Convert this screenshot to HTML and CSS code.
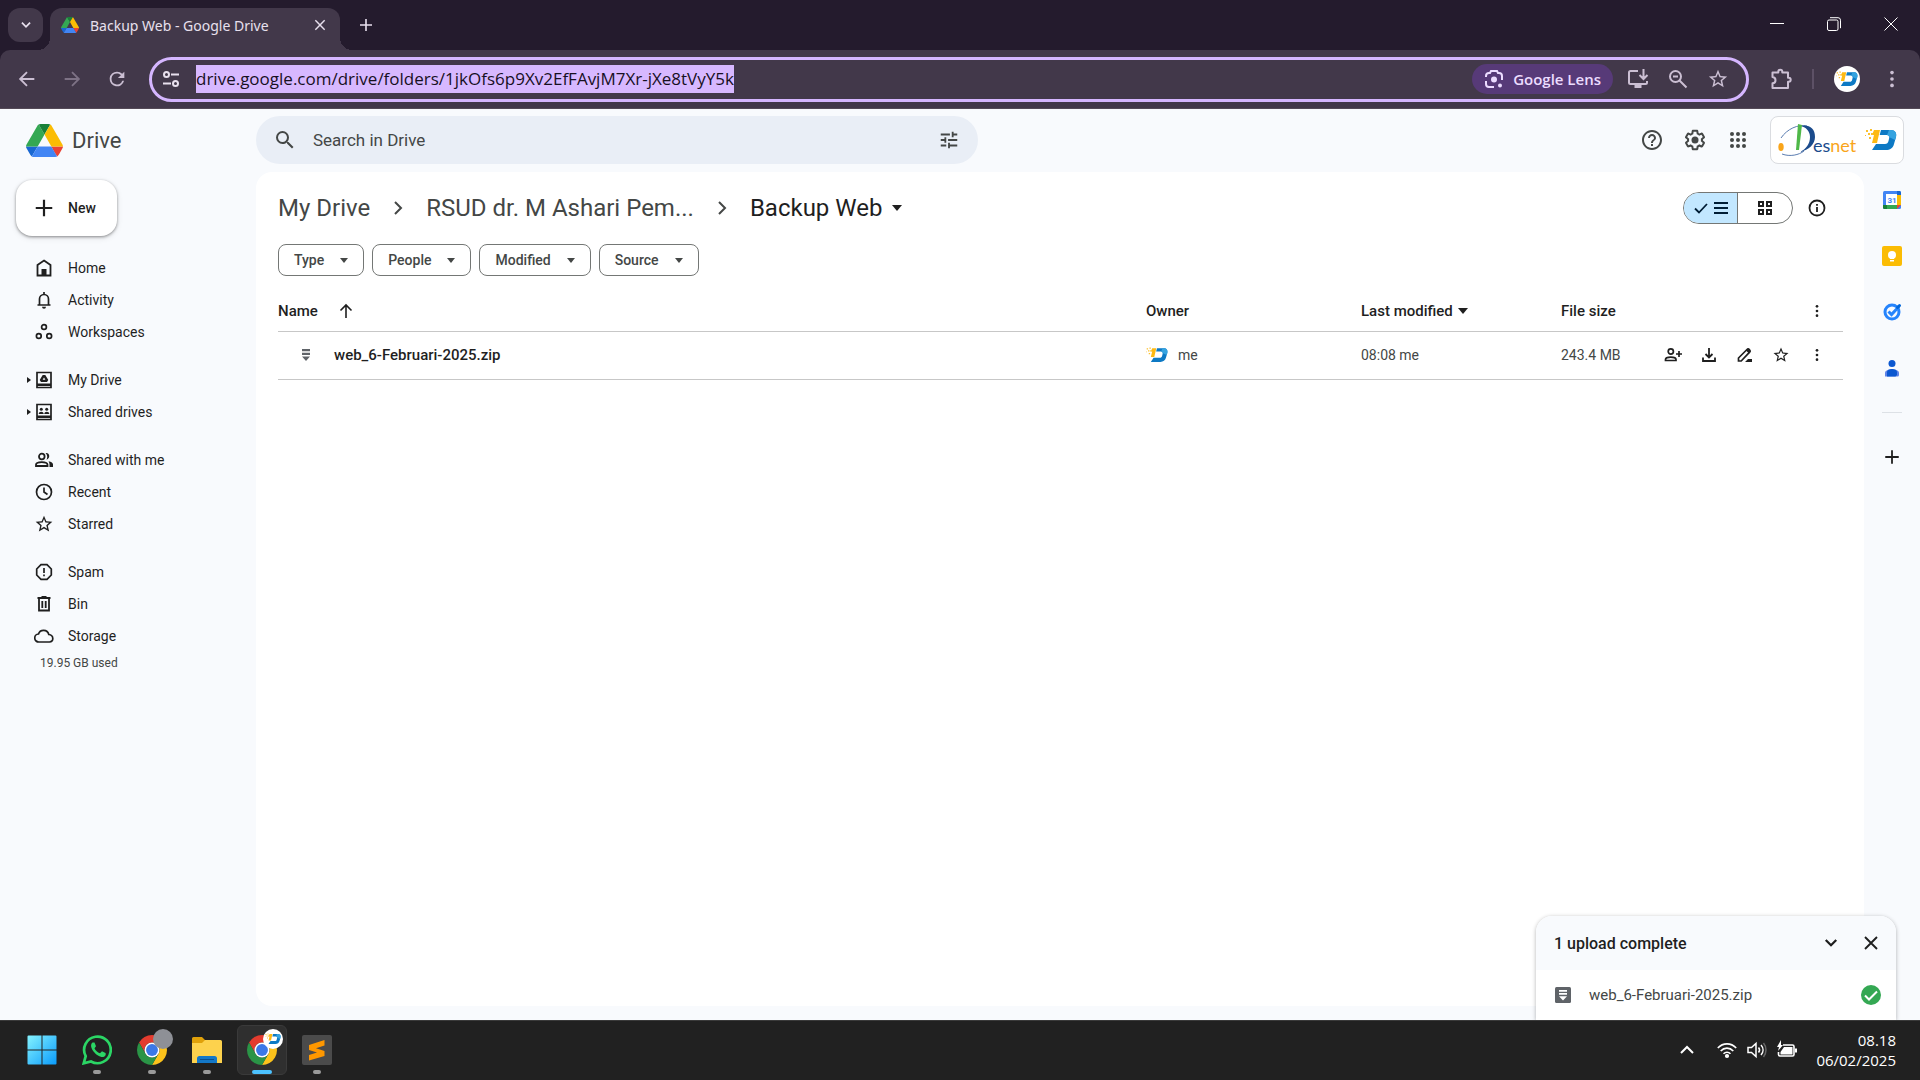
FILE: index.html
```html
<!DOCTYPE html>
<html lang="en">
<head>
<meta charset="utf-8">
<meta name="viewport" content="width=device-width, initial-scale=1">
<title>Backup Web - Google Drive</title>
<link rel="stylesheet" href="styles.css">
</head>
<body>
<svg class="sprite" aria-hidden="true">
  <symbol id="drive-logo" viewBox="0 0 87.3 78">
    <path d="m6.6 66.85 3.85 6.65c.8 1.4 1.95 2.5 3.3 3.3l13.75-23.8H0c0 1.55.4 3.1 1.2 4.5z" fill="#1967d2"/>
    <path d="M43.65 25 29.9 1.2c-1.35.8-2.5 1.9-3.3 3.3l-25.4 44A9.06 9.06 0 0 0 0 53h27.5z" fill="#34a853"/>
    <path d="M73.55 76.8c1.35-.8 2.5-1.9 3.3-3.3l1.6-2.75 7.65-13.25c.8-1.4 1.2-2.95 1.2-4.5H59.8l5.85 11.5z" fill="#ea4335"/>
    <path d="M43.65 25 57.4 1.2C56.05.4 54.5 0 52.9 0H34.4c-1.6 0-3.15.45-4.5 1.2z" fill="#188038"/>
    <path d="M59.8 53H27.5L13.75 76.8c1.35.8 2.9 1.2 4.5 1.2h50.8c1.6 0 3.15-.45 4.5-1.2z" fill="#4285f4"/>
    <path d="m73.4 26.5-12.7-22c-.8-1.4-1.95-2.5-3.3-3.3L43.65 25 59.8 53h27.45c0-1.55-.4-3.1-1.2-4.5z" fill="#fbbc04"/>
  </symbol>
  <symbol id="brand-d" viewBox="0 0 32 22">
    <path d="M16 1h10c4 0 6 3 5 7l-2 7c-1 4-4 6-8 6H7l4-6h9c2 0 3-1 3.500-3l.700-3c.500-2-.500-3-2.500-3h-7z" fill="#0d79c4"/>
    <path d="M24 1h2c4 0 6 3 5 7l-1 3-6-3c0-1-.500-2-2-2z" fill="#35a3e0"/>
    <path d="M9 1h6l-3 13H7l2-8H7z" fill="#fdb913"/>
    <path d="M1 1h2v2H1zM5 0h2v2H5zM3 4h2v2H3zM6 4h2v2H6zM0 6h1v1H0zM4 8h2v2H4z" fill="#fbc02d"/>
  </symbol>
  <symbol id="chrome" viewBox="2 2 44 44">
    <path d="M4.950 13A22 22 0 0 1 43.050 13H24a11 11 0 0 0-9.530 16.500z" fill="#e33b2e"/>
    <path d="M43.050 13A22 22 0 0 1 24 46l9.530-16.500A11 11 0 0 0 24 13z" fill="#fcc21b"/>
    <path d="M24 46A22 22 0 0 1 4.950 13l9.520 16.500a11 11 0 0 0 19.060 0z" fill="#2a9446"/>
    <circle cx="24" cy="24" r="11" fill="#fff"/><circle cx="24" cy="24" r="8.700" fill="#3b78e7"/>
  </symbol>
  <symbol id="dots" viewBox="0 0 24 24"><circle cx="12" cy="5" r="2"/><circle cx="12" cy="12" r="2"/><circle cx="12" cy="19" r="2"/></symbol>
  <symbol id="caret" viewBox="0 0 10 6"><path d="M0 0h10L5 6z"/></symbol>
  <symbol id="chev-right" viewBox="0 0 24 24"><path d="m9 6 6 6-6 6" fill="none" stroke="currentColor" stroke-width="2"/></symbol>
  <symbol id="chev-down" viewBox="0 0 24 24"><path d="m5 8 7 7 7-7" fill="none" stroke="currentColor" stroke-width="3"/></symbol>
  <symbol id="close" viewBox="0 0 24 24"><path d="m4 4 16 16M20 4 4 20" fill="none" stroke="currentColor" stroke-width="2.500"/></symbol>
  <symbol id="plus" viewBox="0 0 24 24"><path d="M12 3v18M3 12h18" fill="none" stroke="currentColor" stroke-width="2.400"/></symbol>
  <symbol id="star" viewBox="0 0 24 24"><path d="m22 9.240-7.190-.620L12 2 9.190 8.630 2 9.240l5.460 4.730L5.820 21 12 17.270 18.180 21l-1.630-7.030zM12 15.400l-3.760 2.270 1-4.280-3.320-2.880 4.380-.380L12 6.100l1.710 4.040 4.380.380-3.320 2.880 1 4.280z"/></symbol>
  <symbol id="zip" viewBox="0 0 8 12"><path d="M0 0h8v2.200H0zM0 3.800h8V6H0zM0 7.600h8L4 12z"/></symbol>
</svg>

<div class="window">
  <header class="tabs">
    <button class="tab-search" aria-label="Search tabs"><svg class="i14"><use href="#chev-down"/></svg></button>
    <div class="tab">
      <svg class="i18"><use href="#drive-logo"/></svg>
      <span class="tab-title">Backup Web - Google Drive</span>
      <button class="bare" aria-label="Close tab"><svg class="i14"><use href="#close"/></svg></button>
    </div>
    <button class="bare new-tab" aria-label="New tab"><svg class="i16"><use href="#plus"/></svg></button>
    <div class="window-controls">
      <button class="bare" aria-label="Minimise"><svg class="i14" viewBox="0 0 14 14"><path d="M0 6.500h14" stroke="#fff"/></svg></button>
      <button class="bare" aria-label="Restore"><svg class="i14" viewBox="0 0 14 14" fill="none" stroke="#fff"><rect x=".500" y="3" width="10.500" height="10.500" rx="1.500"/><path d="M3 .700h8a2.500 2.500 0 0 1 2.500 2.500v8"/></svg></button>
      <button class="bare" aria-label="Close"><svg class="i14" viewBox="0 0 14 14" stroke="#fff"><path d="m.500.500 13 13M13.500.500l-13 13"/></svg></button>
    </div>
  </header>

  <div class="toolbar">
    <div class="history">
      <button class="bare" aria-label="Back"><svg class="i22" viewBox="0 0 24 24" fill="none" stroke="currentColor" stroke-width="2"><path d="M20 12H5M12 4.500 4.500 12l7.500 7.500"/></svg></button>
      <button class="bare faded" aria-label="Forward"><svg class="i22" viewBox="0 0 24 24" fill="none" stroke="currentColor" stroke-width="2"><path d="M4 12h15M12 4.500l7.500 7.500-7.500 7.500"/></svg></button>
      <button class="bare" aria-label="Reload"><svg class="i22" viewBox="0 0 24 24"><path d="M17.650 6.350A7.960 7.960 0 0 0 12 4a8 8 0 1 0 7.730 10h-2.080A6 6 0 1 1 12 6c1.660 0 3.140.690 4.220 1.780L13 11h7V4z"/></svg></button>
    </div>
    <div class="omnibox">
      <svg class="i18 site" viewBox="0 0 18 18" fill="none" stroke="currentColor" stroke-width="2"><circle cx="4.500" cy="4.500" r="2.500"/><path d="M9 4.500h8M1 13.500h8"/><circle cx="13.500" cy="13.500" r="2.500"/></svg>
      <input class="url" aria-label="Address" value="drive.google.com/drive/folders/1jkOfs6p9Xv2EfFAvjM7Xr-jXe8tVyY5k">
      <button class="lens"><svg class="i20" viewBox="0 0 20 20" fill="none" stroke="currentColor" stroke-width="2"><path d="M2 8V7a3 3 0 0 1 3-3h1l1-2h6l1 2h1a3 3 0 0 1 3 3v4M2 12v3a3 3 0 0 0 3 3h5"/><circle cx="10" cy="10.500" r="3" fill="currentColor" stroke="none"/><circle cx="16" cy="16.500" r="2" fill="currentColor" stroke="none"/></svg>Google Lens</button>
      <button class="bare" aria-label="Install app"><svg class="i22" viewBox="0 0 22 22" fill="none" stroke="currentColor" stroke-width="2"><path d="M11 3H3.500A1.500 1.500 0 0 0 2 4.500v10A1.500 1.500 0 0 0 3.500 16h15a1.500 1.500 0 0 0 1.500-1.500V13M16.500 1v9M12.500 7l4 4 4-4"/><path d="M7.500 18.500h7" stroke-width="3"/></svg></button>
      <button class="bare" aria-label="Zoom"><svg class="i20" viewBox="0 0 20 20" fill="none" stroke="currentColor" stroke-width="2"><circle cx="7.500" cy="7.500" r="5.500"/><path d="m11.500 11.500 7 7M5 7.500h5"/></svg></button>
      <button class="bare" aria-label="Bookmark"><svg class="i22"><use href="#star"/></svg></button>
    </div>
    <div class="extras">
      <button class="bare" aria-label="Extensions"><svg class="i22" viewBox="0 0 22 22" fill="none" stroke="currentColor" stroke-width="2"><path d="M2.500 4.500h5.800V3.800a2 2 0 0 1 4 0v.700h5.700v5.300h.700a2 2 0 0 1 0 4H18V20H2.500v-4.700c4-.400 4-5.800 0-6.200z" stroke-linejoin="round"/></svg></button>
      <span class="bar"></span>
      <button class="bare avatar" aria-label="Profile"><svg class="d22"><use href="#brand-d"/></svg></button>
      <button class="bare" aria-label="Menu"><svg class="i22"><use href="#dots"/></svg></button>
    </div>
  </div>

  <div class="page">
    <div class="top">
      <a class="brand" href="#"><svg class="logo"><use href="#drive-logo"/></svg>Drive</a>
      <div class="search">
        <svg class="i24" viewBox="0 0 24 24"><path d="M15.500 14h-.790l-.280-.270A6.470 6.470 0 0 0 16 9.500 6.500 6.500 0 1 0 9.500 16c1.610 0 3.090-.590 4.230-1.570l.270.280v.790l5 4.990L20.490 19zm-6 0C7.010 14 5 11.990 5 9.500S7.010 5 9.500 5 14 7.010 14 9.500 11.990 14 9.500 14z"/></svg>
        <input aria-label="Search in Drive" placeholder="Search in Drive">
        <button class="bare" aria-label="Search options"><svg class="i22" viewBox="0 0 24 24"><path d="M3 17v2h6v-2H3zM3 5v2h10V5H3zm10 16v-2h8v-2h-8v-2h-2v6h2zM7 9v2H3v2h4v2h2V9H7zm14 4v-2H11v2h10zm-6-4h2V7h4V5h-4V3h-2v6z"/></svg></button>
      </div>
      <div class="top-actions">
        <button class="bare" aria-label="Support"><svg class="i24" viewBox="0 0 24 24"><path d="M11 18h2v-2h-2v2zm1-16C6.480 2 2 6.480 2 12s4.480 10 10 10 10-4.480 10-10S17.520 2 12 2zm0 18c-4.410 0-8-3.590-8-8s3.590-8 8-8 8 3.590 8 8-3.590 8-8 8zm0-14c-2.210 0-4 1.790-4 4h2c0-1.100.900-2 2-2s2 .900 2 2c0 2-3 1.750-3 5h2c0-2.250 3-2.500 3-5 0-2.210-1.790-4-4-4z"/></svg></button>
        <button class="bare" aria-label="Settings"><svg class="i24" viewBox="0 0 24 24"><path d="M13.850 22.250h-3.700c-.740 0-1.360-.540-1.450-1.270l-.270-1.890c-.270-.140-.530-.290-.790-.460l-1.800.720c-.700.260-1.470-.030-1.810-.650L2.200 15.530c-.350-.660-.200-1.440.360-1.880l1.530-1.190c-.010-.150-.020-.300-.020-.460 0-.150.010-.310.020-.460l-1.520-1.190c-.590-.450-.740-1.260-.370-1.880l1.850-3.190c.340-.620 1.110-.900 1.790-.630l1.810.730c.260-.170.520-.320.780-.460l.270-1.910c.090-.700.710-1.250 1.440-1.250h3.700c.740 0 1.360.540 1.450 1.270l.270 1.890c.270.140.530.290.790.460l1.800-.720c.710-.260 1.480.030 1.820.650l1.840 3.180c.360.660.200 1.440-.360 1.880l-1.520 1.190c.010.150.020.300.020.460s-.010.310-.020.460l1.520 1.190c.560.450.720 1.230.370 1.860l-1.860 3.220c-.340.620-1.110.900-1.800.630l-1.800-.720c-.260.170-.520.320-.780.460l-.270 1.910c-.100.680-.720 1.220-1.460 1.220zm-3.230-2h2.760l.370-2.550.530-.220c.440-.180.880-.440 1.340-.780l.450-.340 2.380.960 1.380-2.400-2.030-1.580.070-.560c.030-.260.060-.510.060-.780s-.030-.530-.060-.780l-.070-.560 2.030-1.580-1.390-2.400-2.390.960-.450-.350c-.420-.320-.870-.580-1.330-.770l-.520-.220-.370-2.550h-2.760l-.370 2.550-.530.210c-.440.190-.880.440-1.340.790l-.450.330-2.380-.950-1.390 2.390 2.030 1.580-.070.560a7 7 0 0 0-.060.790c0 .260.020.530.060.780l.070.560-2.030 1.580 1.380 2.400 2.390-.960.450.350c.430.330.860.580 1.330.770l.530.220z"/><circle cx="12" cy="12" r="3.500"/></svg></button>
        <button class="bare" aria-label="Google apps"><svg class="i24" viewBox="0 0 24 24"><circle cx="6" cy="6" r="2"/><circle cx="12" cy="6" r="2"/><circle cx="18" cy="6" r="2"/><circle cx="6" cy="12" r="2"/><circle cx="12" cy="12" r="2"/><circle cx="18" cy="12" r="2"/><circle cx="6" cy="18" r="2"/><circle cx="12" cy="18" r="2"/><circle cx="18" cy="18" r="2"/></svg></button>
      </div>
      <button class="account" aria-label="Desnet account">
        <svg class="desnet" viewBox="0 0 80 34">
          <ellipse cx="3" cy="24" rx="2.700" ry="4" fill="#f9a51a"/>
          <path d="M3 15C9 6 20 1 29 3M4 31c8 3 17 1 22-3" fill="none" stroke="#5b7db1" stroke-width="1"/>
          <path d="M22 3c9-2 15 2 15 11 0 7-6 13-15 15 6-3 10-8 10-15 0-6-4-10-10-11z" fill="#1b4b8c"/>
          <path d="m20 1 4 1-3 25h-3z" fill="#4fb848"/>
          <text class="wordmark" x="35" y="29"><tspan fill="#1b4b8c">es</tspan><tspan fill="#f9a51a">net</tspan></text>
        </svg>
        <svg class="d32"><use href="#brand-d"/></svg>
      </button>
    </div>

    <nav class="side" aria-label="Drive">
      <button class="new"><svg class="i22"><use href="#plus"/></svg>New</button>
      <div class="group">
        <a href="#"><svg class="i20" viewBox="0 0 20 20"><path d="M10 2.500 16.500 7v10.500h-13V7z" fill="none" stroke="currentColor" stroke-width="1.800"/><path d="M7.500 11h5v6h-5z"/></svg>Home</a>
        <a href="#"><svg class="i20" viewBox="0 0 20 20"><path d="M3.500 15h13M5.500 15V9a4.500 4.500 0 0 1 9 0v6M10 2v2.500" fill="none" stroke="currentColor" stroke-width="1.700"/><path d="M8 16.700h4a2 2 0 0 1-4 0z"/></svg>Activity</a>
        <a href="#"><svg class="i20" viewBox="0 0 20 20" fill="none" stroke="currentColor" stroke-width="1.700"><circle cx="10" cy="5" r="2.400"/><circle cx="4.800" cy="14" r="2.400"/><circle cx="15.200" cy="14" r="2.400"/></svg>Workspaces</a>
      </div>
      <div class="group">
        <a class="tree" href="#"><svg class="i20" viewBox="0 0 20 20"><path d="M3 2.500h14v15H3z" fill="none" stroke="currentColor" stroke-width="1.700"/><path d="M3 13.500h14V16H3zM8.700 5h2.600l3 5-1.300 2H7l-1.300-2z"/><path d="m10 7.500 1.400 2.300H8.600z" fill="#f8fafd"/></svg>My Drive</a>
        <a class="tree" href="#"><svg class="i20" viewBox="0 0 20 20"><path d="M3 2.500h14v15H3z" fill="none" stroke="currentColor" stroke-width="1.700"/><path d="M3 13.500h14V16H3zM4.700 12c0-3 5-3 5 0zM10.300 12c0-3 5-3 5 0z"/><circle cx="7.300" cy="7.300" r="1.500"/><circle cx="12.700" cy="7.300" r="1.500"/></svg>Shared drives</a>
      </div>
      <div class="group">
        <a href="#"><svg class="i20" viewBox="0 0 20 20"><g fill="none" stroke="currentColor" stroke-width="1.800"><circle cx="7.800" cy="6.500" r="2.800"/><path d="M2 16v-1.200c0-3.600 11.500-3.600 11.500 0V16z"/></g><path d="M11.500 3c4-1 5.500 5 1 6.700 1.200-2 1-4.700-1-6.700zM14.500 11.200c3 .500 4.500 1.800 4.500 3.300V17h-3.500v-2.500c0-1.300-.300-2.300-1-3.300z"/></svg>Shared with me</a>
        <a href="#"><svg class="i20" viewBox="0 0 20 20" fill="none" stroke="currentColor" stroke-width="1.700"><circle cx="10" cy="10" r="7.500"/><path d="M10 5.500V10l3.500 2.500"/></svg>Recent</a>
        <a href="#"><svg class="i20"><use href="#star"/></svg>Starred</a>
      </div>
      <div class="group">
        <a href="#"><svg class="i20" viewBox="0 0 20 20" fill="none" stroke="currentColor" stroke-width="1.700"><path d="M7 2.700h6L17.300 7v6L13 17.300H7L2.700 13V7zM10 6v5M10 12.500v1.700"/></svg>Spam</a>
        <a href="#"><svg class="i20" viewBox="0 0 20 20" fill="none" stroke="currentColor" stroke-width="1.800"><path d="M3.500 4h13M7.500 3h5M5 4v12.500h10V4M8.300 7v7M11.700 7v7"/></svg>Bin</a>
        <a href="#"><svg class="i20" viewBox="0 0 20 20" fill="none" stroke="currentColor" stroke-width="1.700"><path d="M5 16a4 4 0 0 1-.500-8C6 3 13.500 3 14.800 8.500 20 9 20 16 15.500 16z"/></svg>Storage</a>
      </div>
      <p class="used">19.95 GB used</p>
    </nav>

    <main class="panel">
      <div class="path-row">
        <nav class="crumbs" aria-label="Path">
          <a href="#">My Drive</a>
          <svg class="i24"><use href="#chev-right"/></svg>
          <a href="#">RSUD dr. M Ashari Pem...</a>
          <svg class="i24"><use href="#chev-right"/></svg>
          <button class="here">Backup Web<svg class="caret"><use href="#caret"/></svg></button>
        </nav>
        <div class="view">
          <button class="on" aria-label="List layout"><svg class="i16" viewBox="0 0 16 16" fill="none" stroke="currentColor" stroke-width="1.800"><path d="m2 8.500 4 4L14 4"/></svg><svg class="i16" viewBox="0 0 16 16" fill="none" stroke="currentColor" stroke-width="2"><path d="M1 3h14M1 8h14M1 13h14"/></svg></button>
          <button aria-label="Grid layout"><svg class="i16" viewBox="0 0 16 16" fill="none" stroke="currentColor" stroke-width="2"><path d="M2 2h4v4H2zM10 2h4v4h-4zM2 10h4v4H2zM10 10h4v4h-4z"/></svg></button>
        </div>
        <button class="bare" aria-label="View details"><svg class="i20" viewBox="0 0 20 20" fill="none" stroke="currentColor" stroke-width="1.800"><circle cx="10" cy="10" r="7.500"/><path d="M10 9v5M10 6v1.700"/></svg></button>
      </div>

      <div class="chips">
        <button>Type<svg class="caret-s"><use href="#caret"/></svg></button>
        <button>People<svg class="caret-s"><use href="#caret"/></svg></button>
        <button>Modified<svg class="caret-s"><use href="#caret"/></svg></button>
        <button>Source<svg class="caret-s"><use href="#caret"/></svg></button>
      </div>

      <table class="files">
        <thead>
          <tr>
            <th><div class="head">Name<svg class="i16" viewBox="0 0 16 16" fill="none" stroke="currentColor" stroke-width="1.600"><path d="M8 15V2M2.500 7.500 8 2l5.500 5.500"/></svg></div></th>
            <th class="owner">Owner</th>
            <th class="modified"><div class="head near">Last modified<svg class="caret"><use href="#caret"/></svg></div></th>
            <th class="size">File size</th>
            <th class="acts"><div class="actions"><button class="bare" aria-label="More sorting options"><svg class="i16"><use href="#dots"/></svg></button></div></th>
          </tr>
        </thead>
        <tbody>
          <tr>
            <td><div class="file"><svg class="zip"><use href="#zip"/></svg>web_6-Februari-2025.zip</div></td>
            <td class="muted"><div class="who"><svg class="d22"><use href="#brand-d"/></svg>me</div></td>
            <td class="muted">08:08 me</td>
            <td class="muted">243.4 MB</td>
            <td><div class="actions">
              <button class="bare" aria-label="Share"><svg class="i20" viewBox="0 0 20 20" fill="none" stroke="currentColor" stroke-width="1.700"><circle cx="7.800" cy="6.500" r="2.600"/><path d="M2.500 15.500v-1c0-3.300 10.500-3.300 10.500 0v1zM16 6v6M13 9h6"/></svg></button>
              <button class="bare" aria-label="Download"><svg class="i20" viewBox="0 0 20 20" fill="none" stroke="currentColor" stroke-width="1.800"><path d="M10 3v9M6.500 9 10 12.500 13.500 9M4 12.500V16h12v-3.500"/></svg></button>
              <button class="bare" aria-label="Rename"><svg class="i20" viewBox="0 0 20 20"><path d="M3.500 16v-3l8.500-8.500c1.500-1.500 4 1 2.600 2.600L6.200 16z" fill="none" stroke="currentColor" stroke-width="1.700"/><path d="m11 5.500 2-2 3 3-2 2zM10 17l3-3h4v3z"/></svg></button>
              <button class="bare" aria-label="Star"><svg class="i18"><use href="#star"/></svg></button>
              <button class="bare" aria-label="More actions"><svg class="i16"><use href="#dots"/></svg></button>
            </div></td>
          </tr>
        </tbody>
      </table>
    </main>

    <aside class="rail" aria-label="Side panel">
      <button class="bare" aria-label="Calendar"><svg class="i20" viewBox="0 0 20 20"><rect x="1" y="1" width="18" height="18" rx="1.500" fill="#4285f4"/><path d="M15 5h4v10h-4z" fill="#fbbc04"/><path d="M15 1h2.500A1.500 1.500 0 0 1 19 2.500V5h-4z" fill="#1967d2"/><path d="M5 15h10v4H5z" fill="#34a853"/><path d="M1 15h4v4H2.500A1.500 1.500 0 0 1 1 17.500z" fill="#188038"/><path d="M15 15h4l-4 4z" fill="#ea4335"/><path d="M4 4h11v11H4z" fill="#fff"/><text class="day" x="10" y="13">31</text></svg></button>
      <button class="bare" aria-label="Keep"><svg class="i20" viewBox="0 0 20 20"><rect width="20" height="20" rx="2" fill="#fbbc04"/><circle cx="10" cy="9" r="4" fill="#fff"/><path d="M8 11h4v2H8zM8 14h4v1.500H8z" fill="#fff"/></svg></button>
      <button class="bare" aria-label="Tasks"><svg class="i20" viewBox="0 0 20 20" fill="none"><circle cx="10" cy="10" r="7" stroke="#2684fc" stroke-width="3"/><path d="m6.500 9.500 3 3 7.500-8" stroke="#2684fc" stroke-width="3"/><path d="m15.500 5.500 2-2" stroke="#0066da" stroke-width="3" stroke-linecap="round"/></svg></button>
      <button class="bare" aria-label="Contacts"><svg class="i20" viewBox="0 0 20 20"><path d="M3 18.500V15c0-5 14-5 14 0v2a1.500 1.500 0 0 1-1.500 1.500z" fill="#5e84e8"/><path d="M5 18.500V14c0-4 10-4 10 0v3l-1.500 1.500z" fill="#0b57d0"/><circle cx="10" cy="5.500" r="3.500" fill="#0b57d0"/></svg></button>
      <hr>
      <button class="bare" aria-label="Get add-ons"><svg class="i18"><use href="#plus"/></svg></button>
    </aside>

    <section class="upload" aria-label="Uploads">
      <div class="upload-head">
        <h2>1 upload complete</h2>
        <button class="bare" aria-label="Minimise"><svg class="i18"><use href="#chev-down"/></svg></button>
        <button class="bare" aria-label="Close"><svg class="i18"><use href="#close"/></svg></button>
      </div>
      <div class="upload-row">
        <svg class="i16" viewBox="0 0 16 16"><rect width="16" height="16" rx="1.500" fill="#5f6368"/><path d="M4 3h8v1.800H4zM4 6h8v1.800H4zM4 9.200h8L8 13.500z" fill="#fff"/></svg>
        <span>web_6-Februari-2025.zip</span>
        <svg class="i20" viewBox="0 0 20 20"><circle cx="10" cy="10" r="10" fill="#34a853"/><path d="m4 10.500 4 4 8-8" fill="none" stroke="#fff" stroke-width="2"/></svg>
      </div>
    </section>
  </div>

  <footer class="taskbar">
    <button class="app" aria-label="Start"><svg class="i30" viewBox="0 0 30 30"><defs><linearGradient id="win" x2="1" y2="1"><stop stop-color="#85f3ff"/><stop offset="1" stop-color="#0a9bfb"/></linearGradient></defs><path d="M1.500.500h13v14h-14v-13a1 1 0 0 1 1-1zM15.500.500h13a1 1 0 0 1 1 1v13h-14zM.500 15.500h14v14h-13a1 1 0 0 1-1-1zM15.500 15.500h14v13a1 1 0 0 1-1 1h-13z" fill="url(#win)"/></svg></button>
    <button class="app run" aria-label="WhatsApp"><svg class="i30" viewBox="0 0 30 30"><path d="m1.700 28.300 2-7.200A13.300 13.300 0 1 1 9 26.500z" fill="none" stroke="#2bd665" stroke-width="2.700"/><path d="M10.500 7.500c-5 4 4.500 15.500 11 14.500 2-.500 2.800-3 2-4l-3.500-1.800-2 2c-2.500-.700-4.500-2.700-5.500-5l1.500-2L12.500 7.500z" fill="#2bd665"/></svg></button>
    <button class="app run" aria-label="Google Chrome"><svg class="i30"><use href="#chrome"/></svg><span class="badge grey"></span></button>
    <button class="app run" aria-label="File Explorer"><svg class="i30" viewBox="0 0 30 30"><path d="M0 3.500A1.500 1.500 0 0 1 1.500 2H10l3 3v6H0z" fill="#e0a10a"/><path d="M0 8h10l3-3h15.500A1.500 1.500 0 0 1 30 6.500V28H0z" fill="#fdd24d"/><path d="M5 28v-4.500A2.500 2.500 0 0 1 7.500 21h15a2.500 2.500 0 0 1 2.500 2.500V28z" fill="#1478c8"/><path d="M8 24.500h14" stroke="#0b4f8f"/></svg></button>
    <button class="app run active" aria-label="Google Chrome, work profile"><svg class="i30"><use href="#chrome"/></svg><span class="badge"><svg class="d16"><use href="#brand-d"/></svg></span></button>
    <button class="app run" aria-label="Sublime Text"><svg class="i30" viewBox="0 0 30 30"><rect width="30" height="30" rx="2" fill="#4b4b4b"/><path d="M7 10 22.500 5v5.500L14 13.200l8.500 2.800v5L7 25.500V20l8-2.500L7 15z" fill="#ff9800"/></svg></button>
    <div class="tray">
      <button class="bare" aria-label="Hidden icons"><svg class="i16" viewBox="0 0 16 16" fill="none" stroke="#fff" stroke-width="2"><path d="m2 11 6-6 6 6"/></svg></button>
      <svg class="i20" viewBox="0 0 20 20" fill="none" stroke="#fff" stroke-width="1.600"><path d="M.800 8C6 2.500 14 2.500 19.200 8M3.700 11c3.500-3.800 9-3.800 12.600 0M6.500 13.800c2-2 5-2 7 0"/><circle cx="10" cy="16" r="1.300" fill="#fff"/></svg>
      <svg class="i20" viewBox="0 0 20 20" fill="none" stroke="#fff" stroke-width="1.500"><path d="M1 7.500h3.500L9 3.500v13l-4.500-4H1zM11.500 7.500c1.300 1.500 1.300 3.500 0 5M14 5c2.700 3 2.700 7 0 10"/><path d="M16.500 3c3.300 4 3.300 10 0 14" stroke="#666"/></svg>
      <svg class="i20" viewBox="0 0 20 20"><path d="M6 5h9.500A1.500 1.500 0 0 1 17 6.500v8a1.500 1.500 0 0 1-1.500 1.500H3a1.500 1.500 0 0 1-1.500-1.500V12" fill="none" stroke="#fff" stroke-width="1.600"/><path d="M7 7h8.500v7.500H3.500V12zM18 8.500h2v4h-2zM4 0 0 7h2L1 11l5-6H4z" fill="#fff"/></svg>
      <time datetime="2025-02-06T08:18">08.18<br>06/02/2025</time>
    </div>
  </footer>
</div>
</body>
</html>
```
FILE: styles.css
```css
* { box-sizing: border-box; }
body { margin: 0; font-family: Roboto, "Liberation Sans", sans-serif; font-size: 14px; color: #1f1f1f; }
button, input { font: inherit; color: inherit; }
button { cursor: pointer; }
a { color: inherit; text-decoration: none; }
svg { flex: none; display: block; fill: currentColor; }
svg[fill="none"] { fill: none; }
.sprite { position: absolute; width: 0; height: 0; }

.i14 { width: 14px; height: 14px; }
.i16 { width: 16px; height: 16px; }
.i18 { width: 18px; height: 18px; }
.i20 { width: 20px; height: 20px; }
.i22 { width: 22px; height: 22px; }
.i24 { width: 24px; height: 24px; }
.i30 { width: 30px; height: 30px; }
.d16 { width: 16px; height: 12px; }
.d22 { width: 22px; height: 16px; }
.d32 { width: 32px; height: 22px; }

.bare { border: 0; padding: 0; background: none; display: flex; align-items: center; justify-content: center; }
.window { height: 100vh; display: grid; grid-template-rows: 50px 59px 1fr 60px; background: #241b2d; }

/* Tab strip */
.tabs { display: flex; align-items: flex-start; padding: 8px 0 0 8px; color: #e8e0ee; font-family: "Noto Sans", "Open Sans", sans-serif; }
.tab-search { width: 35px; height: 34px; border: 0; padding: 0; border-radius: 12px; background: #42384a; display: flex; align-items: center; justify-content: center; }
.tab { position: relative; height: 42px; width: 290px; margin-left: 7px; padding: 0 13px 8px 11px; display: flex; align-items: center; gap: 11px; border-radius: 12px 12px 0 0; background: #42384a; }
.tab::before, .tab::after { content: ""; position: absolute; bottom: 0; width: 12px; height: 12px; }
.tab::before { left: -12px; background: radial-gradient(circle at 0 0, transparent 12px, #42384a 12px); }
.tab::after { right: -12px; background: radial-gradient(circle at 100% 0, transparent 12px, #42384a 12px); }
.tab-title { flex: 1; white-space: nowrap; }
.new-tab { width: 32px; height: 34px; margin-left: 10px; }
.window-controls { margin-left: auto; padding-right: 1px; display: flex; }
.window-controls .bare { width: 57px; height: 32px; }

/* Toolbar */
.toolbar { display: flex; align-items: center; gap: 14px; padding: 0 0 0 9px; background: #42384a; border-bottom: 1px solid #544a57; border-radius: 10px 10px 0 0; color: #cbbfd3; font-family: "Open Sans", "Noto Sans", sans-serif; }
.history { display: flex; gap: 9px; }
.history .bare, .extras .bare { width: 36px; height: 36px; }
.faded { color: #7d7285; }
.omnibox { flex: 1; height: 45px; border: 3px solid #d5b6ff; border-radius: 23px; padding: 0 13px 0 10px; display: flex; align-items: center; gap: 10px; }
.site { margin: 0 6px 0 0; color: #e8e0ee; }
.url { width: 538px; height: 28px; border: 0; padding: 0; outline: 0; background: #d7b8ff; color: #17101f; font-size: 17px; line-height: 28px; }
.lens { margin-left: auto; height: 30px; border: 0; border-radius: 15px; padding: 0 12px; background: #573a78; color: #ecdcff; font-size: 15px; font-weight: 600; display: flex; align-items: center; gap: 9px; white-space: nowrap; }
.omnibox .bare { width: 30px; height: 30px; }
.extras { display: flex; align-items: center; padding-right: 10px; }
.bar { width: 2px; height: 20px; margin: 0 16px 0 13px; background: #5d5166; }
.extras .bar + .avatar { width: 26px; height: 26px; margin: 0 4px; border-radius: 50%; background: #fff; }
.extras .avatar + .bare { margin-left: 10px; }

/* Drive page */
.page { position: relative; min-height: 0; display: grid; grid-template: 63px 1fr / 256px 1fr 56px; padding-bottom: 14px; background: #f8fafd; overflow: hidden; }
.top { grid-column: 1 / -1; display: flex; align-items: flex-start; padding: 7px 16px 0 26px; color: #444746; }
.brand { width: 230px; height: 48px; display: flex; align-items: center; gap: 9px; font-size: 22px; }
.logo { width: 37px; height: 33px; }
.search { flex: 0 1 722px; height: 48px; padding: 0 18px 0 17px; border-radius: 24px; background: #e9eef6; display: flex; align-items: center; gap: 16px; }
.search input { flex: 1; min-width: 0; border: 0; padding: 0; outline: 0; background: none; font-size: 17px; }
.search input::placeholder { color: #444746; opacity: 1; }
.top-actions { margin-left: auto; height: 48px; display: flex; align-items: center; gap: 19px; padding-right: 20px; }
.account { height: 48px; width: 134px; border: 1px solid #dadce0; border-radius: 8px; padding: 0 6px 0 7px; background: #fff; display: flex; align-items: center; justify-content: space-between; }
.desnet { width: 80px; height: 34px; overflow: visible; }
.wordmark { font-family: "Liberation Sans Narrow", Lato, sans-serif; font-size: 18px; }
.day { font-size: 8px; font-weight: 700; fill: #4285f4; text-anchor: middle; }

.side { padding: 8px 0 0 16px; }
.new { width: 101px; height: 56px; border: 0; border-radius: 16px; padding: 0 17px; background: #fff; box-shadow: 0 1px 3px rgba(0, 0, 0, .4), 0 2px 6px rgba(0, 0, 0, .1); font-weight: 500; display: flex; align-items: center; gap: 13px; }
.group { margin-top: 16px; }
.group a { height: 32px; padding-left: 18px; display: flex; align-items: center; gap: 14px; }
.group .tree { padding-left: 11px; gap: 0; }
.tree::before { content: ""; border: 3px solid transparent; border-left: 4px solid currentColor; border-right: 0; margin-right: 3px; }
.tree svg { margin-right: 14px; }
.used { margin: 3px 0 0 24px; font-size: 12px; line-height: 16px; color: #444746; }

.panel { border-radius: 16px; padding: 18px 21px 0 22px; background: #fff; }
.path-row { display: flex; align-items: center; gap: 14px; height: 36px; }
.path-row > .bare { margin-right: 16px; }
.crumbs { flex: 1; display: flex; align-items: center; gap: 16px; font-size: 24px; line-height: 32px; white-space: nowrap; color: #444746; }
.here { border: 0; padding: 0; background: none; color: #1f1f1f; display: flex; align-items: center; gap: 10px; }
.caret { width: 10px; height: 6px; }
.caret-s { width: 8px; height: 5px; }
.view { display: flex; border: 1px solid #747775; border-radius: 16px; overflow: hidden; }
.view button { width: 54px; height: 30px; border: 0; padding: 0; background: none; display: flex; align-items: center; justify-content: center; gap: 4px; }
.view .on { border-right: 1px solid #747775; background: #c2e7ff; color: #001d35; }
.chips { display: flex; gap: 8px; margin-top: 18px; }
.chips button { height: 32px; border: 1px solid #747775; border-radius: 8px; padding: 0 15px; background: #fff; color: #444746; font-weight: 500; display: flex; align-items: center; gap: 16px; }

.files { width: 100%; margin-top: 16px; border-collapse: collapse; table-layout: fixed; text-align: left; }
.files tr { border-bottom: 1px solid #c7c7c7; }
.files th { height: 39px; padding: 0; font-size: 15px; font-weight: 500; }
.files td { height: 48px; padding: 0; }
.owner { width: 215px; }
.modified { width: 200px; }
.size { width: 94px; }
.acts { width: 188px; }
.head { display: flex; align-items: center; gap: 20px; }
.near { gap: 5px; }
.file { display: flex; align-items: center; gap: 24px; padding-left: 24px; font-size: 15px; font-weight: 500; }
.zip { width: 8px; height: 12px; color: #5f6368; }
.who { display: flex; align-items: center; gap: 10px; }
.muted { color: #444746; }
.actions { display: flex; justify-content: flex-end; gap: 16px; padding-right: 16px; }
.actions .bare { width: 20px; height: 20px; }

.rail { display: flex; flex-direction: column; align-items: center; }
.rail .bare { width: 56px; height: 56px; }
.rail hr { width: 20px; height: 1px; border: 0; margin: 16px 0; background: #dde1e6; }

.upload { position: absolute; right: 24px; bottom: 0; width: 360px; border-radius: 16px 16px 0 0; background: #fff; box-shadow: 0 1px 4px rgba(0, 0, 0, .3); overflow: hidden; }
.upload-head { height: 54px; padding: 0 16px 0 18px; background: #f8fafd; display: flex; align-items: center; gap: 22px; }
.upload-head h2 { flex: 1; margin: 0; font-size: 16px; font-weight: 500; }
.upload-row { height: 50px; padding: 0 15px 0 19px; display: flex; align-items: center; gap: 18px; color: #444746; }
.upload-row span { flex: 1; font-size: 15px; }

/* Taskbar */
.taskbar { display: flex; align-items: center; gap: 5px; padding: 0 24px 1px 17px; background: #212121; border-top: 1px solid #3a3a3a; color: #fff; font-family: "Open Sans", "Noto Sans", sans-serif; }
.app { position: relative; width: 50px; height: 50px; border: 1px solid transparent; border-radius: 6px; padding: 0; background: none; display: flex; align-items: center; justify-content: center; }
.active { background: #2f2f2f; border-color: #3a3a3a; }
.run::after { content: ""; position: absolute; bottom: 0; left: 20px; width: 8px; height: 4px; border-radius: 2px; background: #9a9a9a; }
.active::after { left: 14px; width: 20px; background: #4cc2ff; }
.badge { position: absolute; top: 3px; right: 3px; width: 20px; height: 20px; border-radius: 50%; background: #fff; display: flex; align-items: center; justify-content: center; }
.grey { background: #8e9096; }
.tray { margin-left: auto; display: flex; align-items: center; gap: 10px; }
.tray .bare { width: 20px; margin-right: 10px; }
.tray time { margin-left: 9px; text-align: right; font-size: 15px; line-height: 20px; }
```
